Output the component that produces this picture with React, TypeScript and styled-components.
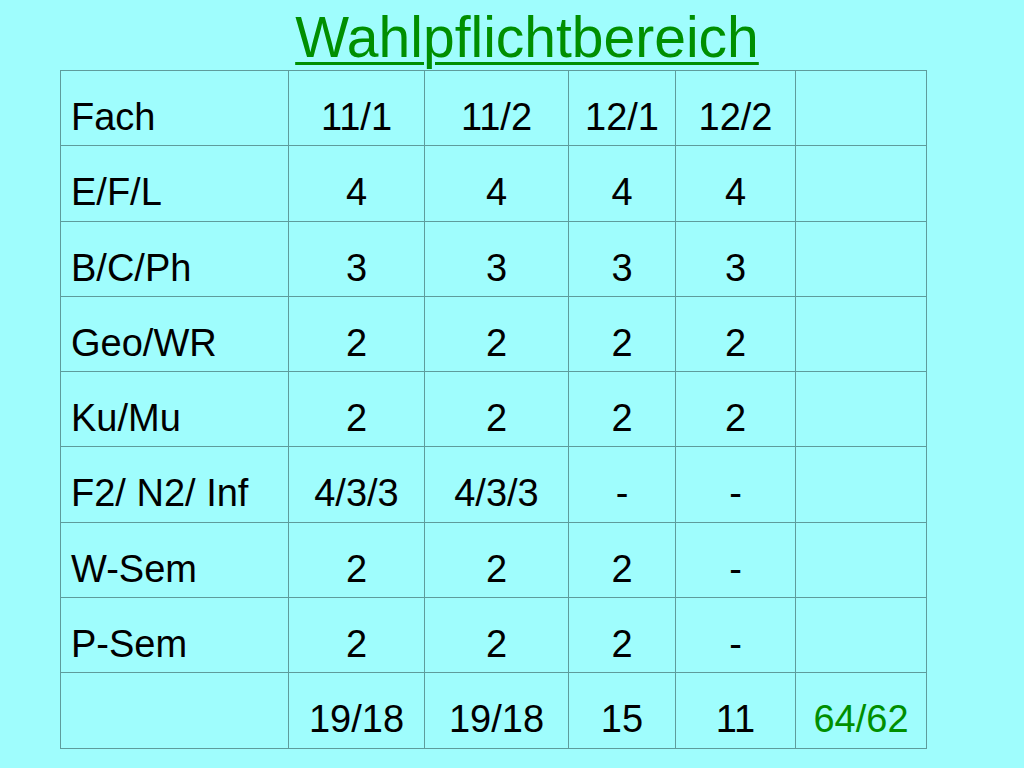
import styled, { createGlobalStyle } from 'styled-components';

const GlobalStyle = createGlobalStyle`
  html, body {
    margin: 0;
    padding: 0;
    background: #9ffdfd;
  }
  body {
    font-family: "Liberation Sans", Arial, sans-serif;
  }
`;

const Slide = styled.div`
  width: 1024px;
  height: 768px;
  background: #9ffdfd;
  overflow: hidden;
`;

const TitleBar = styled.div`
  height: 70px;
  box-sizing: border-box;
  padding: 5px 0 0 30px;
  text-align: center;
`;

const Title = styled.h1`
  margin: 0;
  font-size: 57px;
  font-weight: 400;
  line-height: 1.15;
  color: #008f00;
  text-decoration: underline;
  text-decoration-thickness: 3px;
  text-underline-offset: 5px;
`;

const Table = styled.table`
  margin-left: 60px;
  width: 866px;
  border-collapse: collapse;
  table-layout: fixed;
`;

const Cell = styled.td<{ $first?: boolean; $green?: boolean }>`
  height: 75.3px;
  box-sizing: border-box;
  border: 1px solid #5e9c9c;
  padding: 25px ${(p) => (p.$first ? '0 0 10px' : '0 0 0')};
  vertical-align: top;
  text-align: ${(p) => (p.$first ? 'left' : 'center')};
  font-size: 38px;
  line-height: 1.15;
  color: ${(p) => (p.$green ? '#008f00' : '#000')};
  white-space: nowrap;
`;

const widths = [228, 136, 144, 107, 120, 131];

const rows: string[][] = [
  ['Fach', '11/1', '11/2', '12/1', '12/2', ''],
  ['E/F/L', '4', '4', '4', '4', ''],
  ['B/C/Ph', '3', '3', '3', '3', ''],
  ['Geo/WR', '2', '2', '2', '2', ''],
  ['Ku/Mu', '2', '2', '2', '2', ''],
  ['F2/ N2/ Inf', '4/3/3', '4/3/3', '-', '-', ''],
  ['W-Sem', '2', '2', '2', '-', ''],
  ['P-Sem', '2', '2', '2', '-', ''],
  ['', '19/18', '19/18', '15', '11', '64/62'],
];

export default function App() {
  return (
    <Slide>
      <GlobalStyle />
      <TitleBar>
        <Title>Wahlpflichtbereich</Title>
      </TitleBar>
      <Table>
        <colgroup>
          {widths.map((w, i) => (
            <col key={i} style={{ width: w }} />
          ))}
        </colgroup>
        <tbody>
          {rows.map((r, ri) => (
            <tr key={ri}>
              {r.map((c, ci) => (
                <Cell key={ci} $first={ci === 0} $green={ci === 5}>
                  {c}
                </Cell>
              ))}
            </tr>
          ))}
        </tbody>
      </Table>
    </Slide>
  );
}
